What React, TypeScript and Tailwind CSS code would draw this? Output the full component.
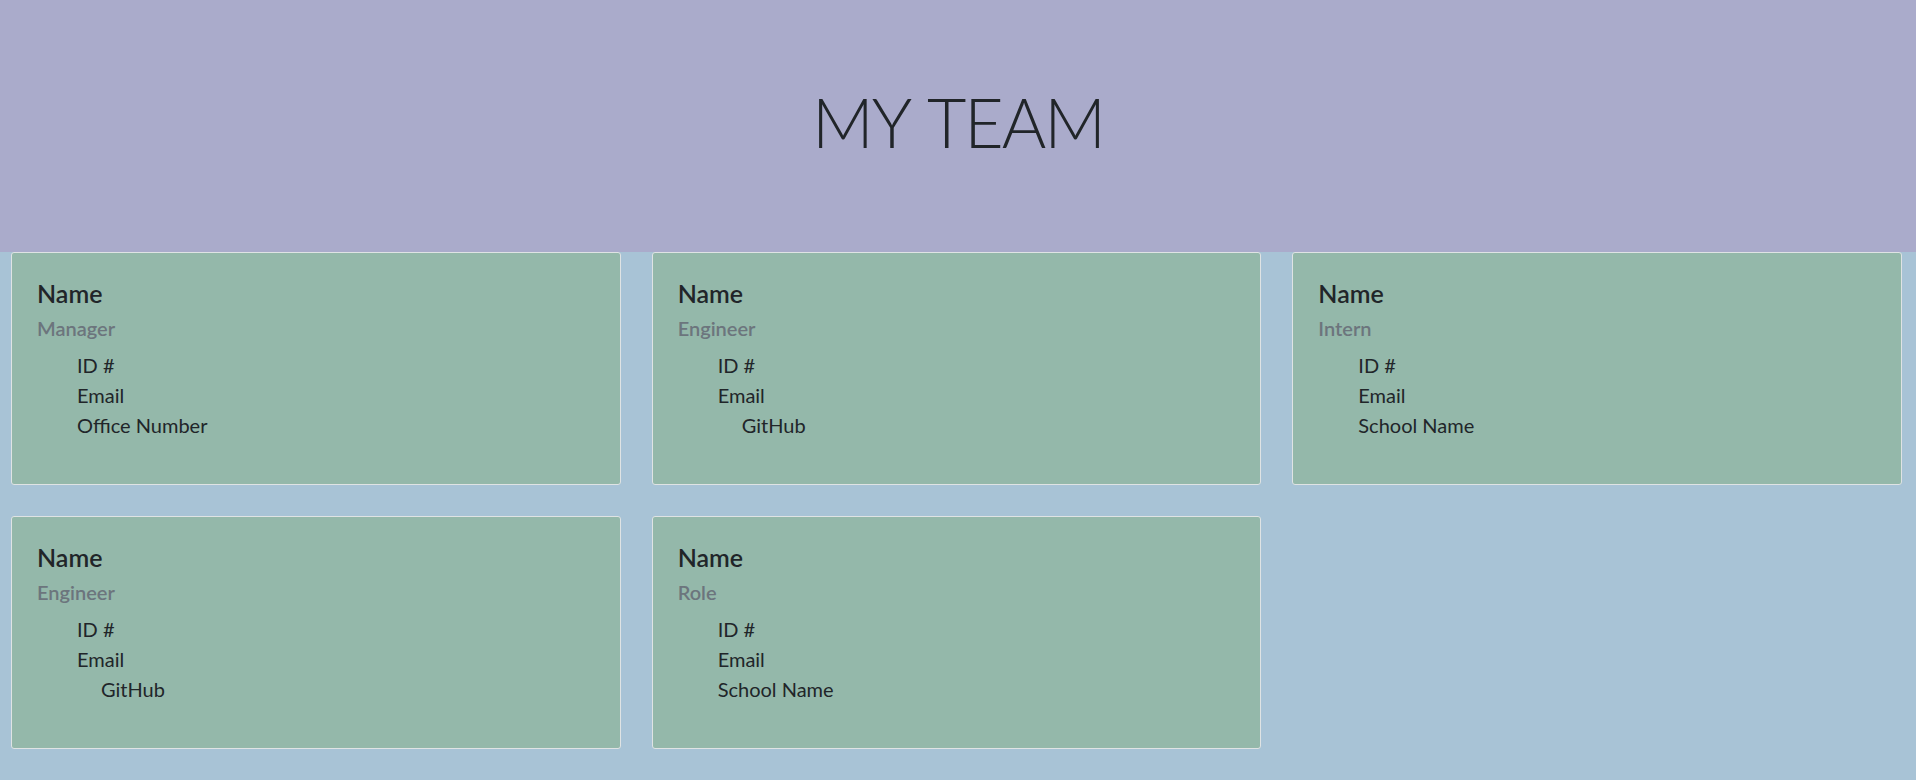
const team = [
  { name: "Name", role: "Manager", extra: "Office Number", indent: false },
  { name: "Name", role: "Engineer", extra: "GitHub", indent: true },
  { name: "Name", role: "Intern", extra: "School Name", indent: false },
  { name: "Name", role: "Engineer", extra: "GitHub", indent: true },
  { name: "Name", role: "Role", extra: "School Name", indent: false },
];

function EmployeeCard({ member }: { member: any }) {
  return (
    <div className="h-[233px] bg-[#94b8aa] border border-[#dfe3e4] rounded-[3px]">
      <div className="px-[25px] pt-[25px]">
        <h5 className="text-[25px] leading-[30px] font-semibold text-[#212529]">
          {member.name}
        </h5>
        <h6 className="mt-[8px] text-[20px] leading-[24px] font-semibold text-[#6c757d]">
          {member.role}
        </h6>
        <ul className="mt-[9.5px] pl-[40px] text-[20px] leading-[30px] text-[#212529]">
          <li>ID #</li>
          <li>Email</li>
          <li className={member.indent ? "pl-[24px]" : ""}>{member.extra}</li>
        </ul>
      </div>
    </div>
  );
}

export default function App() {
  return (
    <div
      className="min-h-[780px] bg-[#a8c3d6]"
      style={{ fontFamily: "Lato, 'Noto Sans', sans-serif" }}
    >
      <header className="h-[252px] bg-[#aaabcb] pt-[80px]">
        <h1 className="text-center text-[68px] leading-[84px] font-light tracking-[-2px] [word-spacing:5px] text-[#212529]">
          MY TEAM
        </h1>
      </header>
      <main className="grid grid-cols-3 gap-x-[31px] gap-y-[31px] pl-[11px] pr-[14px] pb-[32px]">
        {team.map((member, index) => (
          <EmployeeCard member={member} key={index} />
        ))}
      </main>
    </div>
  );
}
